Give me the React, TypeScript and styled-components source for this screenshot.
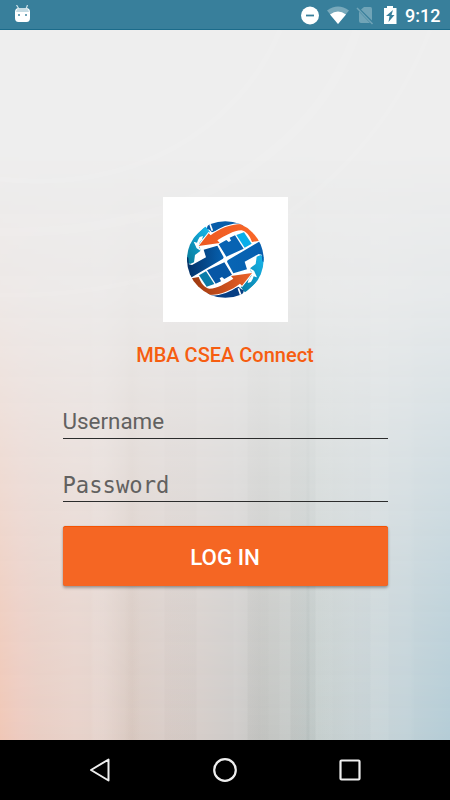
import React from "react";
import styled, { createGlobalStyle } from "styled-components";

const GlobalStyle = createGlobalStyle`
  * { box-sizing: border-box; }
  body { margin: 0; background: #000; }
`;

const Screen = styled.div`
  width: 450px;
  height: 800px;
  display: flex;
  flex-direction: column;
  overflow: hidden;
  font-family: Roboto, "Liberation Sans", sans-serif;
`;

const StatusBar = styled.header`
  height: 30px;
  flex: none;
  display: flex;
  align-items: center;
  background: #387f9b;
  border-bottom: 1px solid #1b6b8a;
  color: #fff;
  svg { display: block; flex: none; }
`;

const Droid = styled.svg`
  margin-left: 14px;
  margin-right: auto;
`;

const StatusIcons = styled.div`
  display: flex;
  align-items: center;
  gap: 6px;
  margin-right: 7px;
`;

const Clock = styled.span`
  width: 45px;
  font-size: 18px;
  font-weight: 500;
  line-height: 28px;
  padding-top: 2px;
`;

const Main = styled.main`
  flex: 1;
  position: relative;
  display: flex;
  flex-direction: column;
  align-items: center;
  padding-top: 167px;
  background: #eee;
`;

const Backdrop = styled.div`
  position: absolute;
  inset: 0;
  background:
    linear-gradient(90deg,
      transparent 90px, rgba(255,255,255,.07) 94px 98px, transparent 124px,
      rgba(139,100,80,.04) 132px, transparent 141px 164px,
      rgba(110,90,80,.03) 165px 196px, transparent 197px 233px,
      rgba(255,255,255,.04) 234px 247px, rgba(80,85,82,.03) 248px 260px,
      rgba(80,85,82,.02) 261px 268px, transparent 269px 279px,
      rgba(255,255,255,.05) 280px 290px, rgba(80,90,90,.03) 291px 306px,
      rgba(70,90,90,.08) 307px 309px, rgba(70,90,90,.02) 310px 315px,
      rgba(255,255,255,.09) 316px 332px, rgba(255,255,255,.06) 333px 354px,
      rgba(255,255,255,.02) 355px 370px, rgba(255,255,255,.1) 371px 388px,
      rgba(255,255,255,.05) 389px 410px, transparent 415px),
    linear-gradient(90deg, #f0c7b6 0, #edcbc0 20px, #e9cec4 40px, #e8d2ca 75px,
      #e3d1ca 105px, #dacac2 130px, #d9cdc8 165px, #d5cdc9 200px, #cecbc9 235px,
      #c4c5c2 262px, #c3c7c5 290px, #c0cac9 320px, #c5d0d3 360px, #bfd0d6 405px, #b4ccd6 450px);
  mask-image: linear-gradient(#0000 120px, #0002 270px, #0004 340px, #0008 470px, #000c 590px, #000 710px);
`;

const Arcs = styled.svg`
  position: absolute;
  inset: 0;
`;

const LogoTile = styled.div`
  position: relative;
  width: 125px;
  height: 125px;
  background: #fff;
  display: flex;
  align-items: center;
  justify-content: center;
`;

const Title = styled.h1`
  position: relative;
  margin: 21px 0 0;
  font-size: 20px;
  font-weight: 500;
  line-height: 24px;
  color: #f65d10;
`;

const Form = styled.div`
  position: relative;
  width: 325px;
  display: flex;
  flex-direction: column;
`;

const Field = styled.div<{ $mono?: boolean }>`
  height: ${(p) => (p.$mono ? 63 : 72)}px;
  padding-bottom: ${(p) => (p.$mono ? 2 : 3)}px;
  display: flex;
  align-items: flex-end;
  border-bottom: 1px solid #2b2c2c;
  color: #626160;
  font-family: ${(p) => (p.$mono ? '"DejaVu Sans Mono", monospace' : "Roboto, sans-serif")};
  font-size: ${(p) => (p.$mono ? 22.2 : 22.4)}px;
  line-height: 27px;
`;

const LoginButton = styled.button`
  margin-top: 24px;
  height: 60px;
  padding: 0;
  border: 0;
  border-top: 1px solid #f65200;
  border-radius: 2.5px;
  background: #f56623;
  color: #fff;
  font: 500 22.3px Roboto, sans-serif;
  box-shadow: 0 2px 3px rgba(0, 0, 0, 0.3), 0 0 1px rgba(0, 0, 0, 0.3);
`;

const NavBar = styled.nav`
  height: 60px;
  flex: none;
  display: flex;
  align-items: center;
  justify-content: space-between;
  padding: 0 87px;
  background: #000;
`;

const Half = ({ lower = false }: { lower?: boolean }) => {
  const id = lower ? "l" : "u";
  return (
    <g transform={lower ? "rotate(180 136 133.500)" : undefined}>
      <path fill={lower ? "#073f84" : "#075ca9"} d="M88 14 H190 V40 H130 L96 52 L88 44 L80 42Z" />
      <path stroke="#fff" strokeWidth="5" d="M88 22 L97 47" />
      <path fill={`url(#${id}-cyan)`} d="M15 138 V90 L76 34 L90 51 L66 74 L58 92 L62 107 L45 120 L42 142 L30 147Z" />
      <path fill="#fff" d="M69 63 L66 74 L58 84 L56 94 L64 109 L50 100 L41 80 L51 83 L54 75 L59 66Z" />
      <path fill={`url(#${id}-orange)`} stroke="#fff" strokeWidth="6" paintOrder="stroke" d="M56 93 L86 55 L92 61 C116 42 150 27 185 27 C212 31 237 55 246 76 L216 81 C209 62 199 49 184 46 C160 46 135 63 112 76 L119 84 Z" />
      <path fill={`url(#${id}-blue)`} d="M15 123 L25 128 L27 148 L36 150 L78 127 L71 104 L112 92 L131 127 L129 131 L30 190 L15 170Z" />
      <path fill={lower ? "#0757a5" : "#0863b3"} d="M116 88 L139 75 L146 81 L153 77 L149 68 L165 61 L191 101 L139 125Z" />
      <path fill={lower ? "#087ca9" : "#08aee9"} d="M169 60 L192 52 L215 86 L194 98Z" />
    </g>
  );
};

const Globe = () => (
  <svg width="90" height="90" viewBox="0 0 270 270" role="img" aria-label="MBA CSEA globe">
    <defs>
      <clipPath id="ball"><circle cx="136" cy="133.500" r="115" /></clipPath>
      <linearGradient id="u-cyan" x1="0" y1="1" x2="1" y2="0"><stop stopColor="#087693" /><stop offset="1" stopColor="#18b9ef" /></linearGradient>
      <linearGradient id="l-cyan" x1="0" y1="1" x2="1" y2="0"><stop stopColor="#18b9ef" /><stop offset="1" stopColor="#087ba1" /></linearGradient>
      <linearGradient id="u-orange"><stop stopColor="#ec5921" /><stop offset="1" stopColor="#fa6829" /></linearGradient>
      <linearGradient id="l-orange"><stop stopColor="#ed6229" /><stop offset="1" stopColor="#98370e" /></linearGradient>
      <linearGradient id="u-blue"><stop stopColor="#042e62" /><stop offset="1" stopColor="#0661b0" /></linearGradient>
      <linearGradient id="l-blue"><stop stopColor="#075eae" /><stop offset="1" stopColor="#0865b4" /></linearGradient>
    </defs>
    <g clipPath="url(#ball)">
      <Half />
      <Half lower />
    </g>
  </svg>
);

export default function App() {
  return (
    <Screen>
      <GlobalStyle />
      <StatusBar>
        <Droid width="17" height="20" viewBox="0 0 17 20">
          <path d="M2.500 0 L5 4 M13.500 0 L12 4" stroke="#cee1e8" strokeWidth="1.200" />
          <path d="M1 7 Q1 3 5 3 H12 Q16 3 16 7 V13 Q16 17 12.500 17 H4.500 Q1 17 1 13Z" fill="#fff" />
          <path d="M2 7 Q3 3 6 3 H11 Q14 3 15 7Z" fill="#c5dbe3" />
          <path d="M4 10 h2 M11 10 h2" stroke="#6fa3b7" strokeWidth="2" />
        </Droid>
        <StatusIcons>
          <svg width="19" height="20" viewBox="0 0 19 20"><circle cx="9" cy="10.500" r="9" fill="#fff" /><path d="M5 10.500h8" stroke="#387f9b" strokeWidth="1.800" /></svg>
          <svg width="24" height="20" viewBox="0 0 24 20"><path d="M1 5.500 Q12 -2.500 23 5.500 L12 19Z" fill="#78a9bb" /><path d="M4 9.500 Q12 3.500 20 9.500 L12 19Z" fill="#fff" /></svg>
          <svg width="18" height="20" viewBox="0 0 18 20"><path d="M8 2 H14.500 Q16 2 16 4 V15.500 L5 4.500Z M3 6.500 L14 18 H5 Q3 18 3 16Z" fill="#70a4b7" /><path d="M1 3 L16.500 19" stroke="#70a4b7" strokeWidth="1.500" /></svg>
          <svg width="18" height="20" viewBox="0 0 18 20"><path d="M7 1 h6 v2 h3.500 v16 H4 V3 h3Z" fill="#fff" /><path d="M13 5 L6 11 h3.500 l-1 6 L14.500 10 h-3Z" fill="#387f9b" /></svg>
        </StatusIcons>
        <Clock>9:12</Clock>
      </StatusBar>
      <Main>
        <Backdrop />
        <Arcs width="450" height="710" viewBox="0 0 450 710" fill="none" stroke="#fff">
          <path d="M0 149 C130 164 238 102 280 0" strokeWidth="5" opacity=".1" />
          <path d="M0 202 C185 205 315 125 357 0" strokeWidth="9" opacity=".07" />
          <path d="M0 265 C210 270 370 160 430 0" strokeWidth="5" opacity=".06" />
        </Arcs>
        <LogoTile><Globe /></LogoTile>
        <Title>MBA CSEA Connect</Title>
        <Form>
          <Field>Username</Field>
          <Field $mono>Password</Field>
          <LoginButton type="button">LOG IN</LoginButton>
        </Form>
      </Main>
      <NavBar>
        <svg width="26" height="26" viewBox="0 0 26 26" fill="none" stroke="#eee" strokeWidth="2" strokeLinejoin="round"><path d="M21.500 2.500 V23.500 L4 13Z" /></svg>
        <svg width="26" height="26" viewBox="0 0 26 26" fill="none" stroke="#eee" strokeWidth="2.200"><circle cx="13" cy="13" r="10.800" /></svg>
        <svg width="26" height="26" viewBox="0 0 26 26" fill="none" stroke="#eee" strokeWidth="2.200"><rect x="3.500" y="3.500" width="19" height="19" rx="1" /></svg>
      </NavBar>
    </Screen>
  );
}
